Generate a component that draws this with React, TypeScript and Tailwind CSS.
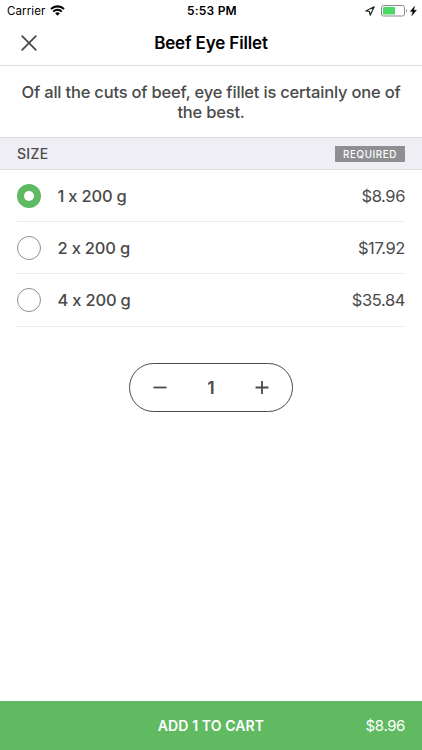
import React, { useState } from 'react';

interface SizeOption {
  quantity: number;
  price: number;
}

const SIZES: SizeOption[] = [
  { quantity: 1, price: 8.96 },
  { quantity: 2, price: 17.92 },
  { quantity: 4, price: 35.84 },
];

const formatPrice = (value: number) => `$${value.toFixed(2)}`;

function StatusBar() {
  return (
    <div className="grid h-[22px] grid-cols-[1fr_auto_1fr] items-center pl-[7px] pr-[5px] text-[11.5px] leading-none text-black">
      <div className="flex items-center gap-[5px]">
        <span className="pt-[2px] tracking-[0.1px]">Carrier</span>
        <svg width="15" height="11" viewBox="0 0 15 11" fill="none" className="mb-px">
          <path d="M1 4a9.3 9.3 0 0 1 13 0" stroke="black" strokeWidth="2.1" />
          <path d="M3.2 6.6a6 6 0 0 1 8.6 0" stroke="black" strokeWidth="2" />
          <path d="M5.2 8.3a3.3 3.3 0 0 1 4.6 0L7.5 10.7z" fill="black" />
        </svg>
      </div>
      <span className="text-[12px] font-semibold tracking-[0.2px]">5:53 PM</span>
      <div className="flex items-center justify-end">
        <svg width="10" height="10" viewBox="0 0 10 10" fill="none" className="mr-[6px]">
          <path d="M9.2.8.8 5l3.6.5.8 3.7z" stroke="#222" strokeWidth="1.2" strokeLinejoin="round" />
        </svg>
        <svg width="27" height="12" viewBox="0 0 27 12" fill="none" className="mr-[2px]">
          <rect x="0.5" y="0.5" width="23" height="10.5" rx="2" stroke="#8c8c8c" />
          <rect x="2" y="2" width="12" height="7.5" rx="0.5" fill="#4cd964" />
          <path d="M25 4c1.3.5 1.3 3.2 0 3.7z" fill="#8c8c8c" />
        </svg>
        <svg width="7" height="10" viewBox="0 0 7 10">
          <path d="M4.6.3.3 5.5h2.6L1.7 9.7l4.8-5.5H3.7z" fill="black" stroke="black" strokeWidth="0.4" />
        </svg>
      </div>
    </div>
  );
}

function Radio({ checked }: { checked: boolean }) {
  if (checked) {
    return (
      <span className="flex size-6 items-center justify-center rounded-full bg-[#5fba62]">
        <span className="size-[10px] rounded-full bg-white" />
      </span>
    );
  }
  return <span className="size-6 rounded-full border border-[#8e8e8e] bg-white" />;
}

export default function App() {
  const [selected, setSelected] = useState(0);
  const [count, setCount] = useState(1);

  const total = SIZES[selected].price * count;

  return (
    <div className="flex h-[750px] w-[422px] flex-col overflow-hidden bg-white font-['Inter',sans-serif] text-[#4a4a4a] [font-feature-settings:'calt'_0]">
      <StatusBar />

      {/* Header */}
      <header className="grid h-11 grid-cols-[40px_1fr_40px] items-center border-b border-[#dcdcdc] px-[17px] pb-[2px]">
        <button type="button" aria-label="Close" className="ml-[4px] cursor-pointer">
          <svg width="16" height="16" viewBox="0 0 16 16" fill="none" stroke="#4a4a4a" strokeWidth="1.8" strokeLinecap="round">
            <path d="M1.2 1.2l13.6 13.6M14.8 1.2 1.2 14.8" />
          </svg>
        </button>
        <h1 className="pt-px text-center text-[17px] font-semibold leading-5 tracking-[-0.15px] text-black">Beef Eye Fillet</h1>
      </header>

      <p className="h-[71px] px-4 pt-4 text-center text-[16.5px] font-medium leading-5 tracking-[-0.2px]">
        Of all the cuts of beef, eye fillet is certainly one of the best.
      </p>

      {/* Size options */}
      <div className="flex h-[33px] items-center justify-between border-y border-[#dddde1] bg-[#efeef5] px-[17px]">
        <h2 className="text-[14px] font-medium tracking-[0.3px]">SIZE</h2>
        <span className="flex h-4 w-[70px] items-center justify-center bg-[#8e8e93] pt-px text-[9.8px] font-medium leading-[15px] tracking-[0.6px] text-white">
          REQUIRED
        </span>
      </div>
      <div className="flex flex-col px-[17px]">
        {SIZES.map((size, index) => (
          <button
            key={size.quantity}
            type="button"
            onClick={() => setSelected(index)}
            className="flex h-[52.2px] cursor-pointer items-center border-b border-[#ebebeb] text-[16.5px]"
          >
            <Radio checked={selected === index} />
            <span className="ml-[16.5px] pt-px font-medium tracking-[-0.2px]">{size.quantity} x 200 g</span>
            <span className="ml-auto pt-px tracking-[-0.4px]">{formatPrice(size.price)}</span>
          </button>
        ))}
      </div>

      {/* Quantity */}
      <div className="mt-9 ml-[129px] flex h-[49px] w-[164px] items-center justify-between rounded-full border border-[#4a4a4a] px-[23px]">
        <button type="button" aria-label="Remove one" onClick={() => setCount(Math.max(1, count - 1))} className="cursor-pointer">
          <svg width="14" height="14" viewBox="0 0 14 14" stroke="#4a4a4a" strokeWidth="1.8">
            <path d="M0.5 7.5h13" />
          </svg>
        </button>
        <span className="pt-[2px] text-[17.5px] font-semibold">{count}</span>
        <button type="button" aria-label="Add one" onClick={() => setCount(count + 1)} className="cursor-pointer">
          <svg width="14" height="14" viewBox="0 0 14 14" stroke="#4a4a4a" strokeWidth="1.8">
            <path d="M0.6 7.5h12.8M7 1.1v12.8" />
          </svg>
        </button>
      </div>

      {/* Add to cart */}
      <button
        type="button"
        className="mt-auto grid h-[49px] cursor-pointer grid-cols-[1fr_auto_1fr] items-center bg-[#5fba62] px-[17px] text-white"
      >
        <span />
        <span className="text-[14px] font-semibold tracking-[0.1px]">ADD {count} TO CART</span>
        <span className="pt-px text-right text-[15px] tracking-[-0.4px]">{formatPrice(total)}</span>
      </button>
    </div>
  );
}
